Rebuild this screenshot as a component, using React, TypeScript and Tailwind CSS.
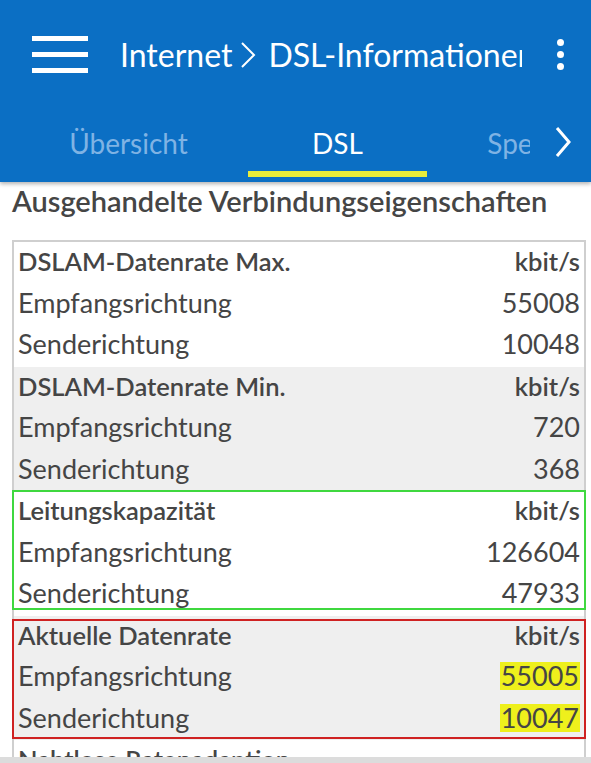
import * as React from "react";

type Row = { label: string; value: string; bold?: boolean; mark?: boolean };
type Group = { rows: Row[]; gray?: boolean };

const groups: Group[] = [
  {
    rows: [
      { label: "DSLAM-Datenrate Max.", value: "kbit/s", bold: true },
      { label: "Empfangsrichtung", value: "55008" },
      { label: "Senderichtung", value: "10048" },
    ],
  },
  {
    gray: true,
    rows: [
      { label: "DSLAM-Datenrate Min.", value: "kbit/s", bold: true },
      { label: "Empfangsrichtung", value: "720" },
      { label: "Senderichtung", value: "368" },
    ],
  },
  {
    rows: [
      { label: "Leitungskapazität", value: "kbit/s", bold: true },
      { label: "Empfangsrichtung", value: "126604" },
      { label: "Senderichtung", value: "47933" },
    ],
  },
  {
    gray: true,
    rows: [
      { label: "Aktuelle Datenrate", value: "kbit/s", bold: true },
      { label: "Empfangsrichtung", value: "55005", mark: true },
      { label: "Senderichtung", value: "10047", mark: true },
    ],
  },
  {
    rows: [{ label: "Nahtlose Ratenadaption", value: "", bold: true }],
  },
];

function TableRow({ row }: { row: Row }) {
  return (
    <div
      className={
        "h-[41.5px] flex items-center justify-between px-[4px] pb-[3px] " +
        (row.bold ? "font-semibold text-[25.5px]" : "text-[27px]")
      }
    >
      <span>{row.label}</span>
      {row.value && (
        <span className={row.mark ? "bg-[#eef01c] px-[1px] leading-[28px]" : ""}>{row.value}</span>
      )}
    </div>
  );
}

export default function App() {
  return (
    <div
      className="h-screen flex flex-col overflow-hidden bg-white text-[#454545]"
      style={{ fontFamily: "Lato, 'Noto Sans', sans-serif" }}
    >
      {/* Header */}
      <header className="relative z-10 shrink-0 bg-[#0b6fc4] shadow-[0_2px_4px_rgba(0,0,0,0.3)]">
        <div className="h-[105px] pt-[4px] flex items-center">
          <div className="ml-[32px] w-[56px] flex flex-col gap-[11px]">
            <span className="h-[5px] bg-white" />
            <span className="h-[5px] bg-white" />
            <span className="h-[5px] bg-white" />
          </div>
          <div className="ml-[32px] w-[402px] overflow-hidden whitespace-nowrap flex items-center text-[32px] text-white">
            <span>Internet</span>
            <svg width="20" height="28" viewBox="0 0 20 28" className="ml-[6px] mr-[10px] shrink-0">
              <path d="M4 2 L16 14 L4 26" fill="none" stroke="white" strokeWidth="2" />
            </svg>
            <span>DSL-Informationen</span>
          </div>
          <div className="ml-[35px] flex flex-col gap-[5px]">
            <span className="w-[7px] h-[7px] rounded-full bg-white" />
            <span className="w-[7px] h-[7px] rounded-full bg-white" />
            <span className="w-[7px] h-[7px] rounded-full bg-white" />
          </div>
        </div>
        <div className="h-[77px] flex">
          <div className="ml-[24px] w-[506px] overflow-hidden flex text-[28px]">
            <div className="w-[209px] shrink-0 flex flex-col items-center">
              <span className="mt-[17px] text-[#7fb3e4]">Übersicht</span>
            </div>
            <div className="w-[209px] shrink-0 flex flex-col items-center">
              <span className="mt-[17px] text-white">DSL</span>
              <span className="mt-auto mb-[5px] w-[179px] h-[6px] bg-[#e8ec3a]" />
            </div>
            <div className="w-[209px] shrink-0 flex flex-col items-center">
              <span className="mt-[17px] text-[#7fb3e4]">Spektrum</span>
            </div>
          </div>
          <div className="flex-1 flex items-center justify-center pb-[4px]">
            <svg width="18" height="32" viewBox="0 0 18 32" className="ml-[4px]">
              <path d="M3 2 L15 16 L3 30" fill="none" stroke="white" strokeWidth="3" />
            </svg>
          </div>
        </div>
      </header>

      {/* Content */}
      <main className="flex-1 overflow-hidden">
        <h2 className="ml-[12px] text-[29px] font-semibold leading-[38px]">
          Ausgehandelte Verbindungseigenschaften
        </h2>
        <div className="relative mt-[20px] ml-[12px] w-[574px] border-2 border-[#cfcfcf]">
          {groups.map((g, i) => (
            <div key={i} className={g.gray ? "bg-[#efefef]" : "bg-white"}>
              {g.rows.map((r, j) => (
                <TableRow key={j} row={r} />
              ))}
            </div>
          ))}
          {/* annotation frames */}
          <div className="absolute left-[-2px] right-[-2px] top-[248px] h-[120px] border-2 border-[#3fd83f]" />
          <div className="absolute left-[-2px] right-[-2px] top-[377px] h-[120px] border-2 border-[#cf2222]" />
        </div>
      </main>
      <div className="shrink-0 h-[6px] bg-[#dcdcdc]" />
    </div>
  );
}
